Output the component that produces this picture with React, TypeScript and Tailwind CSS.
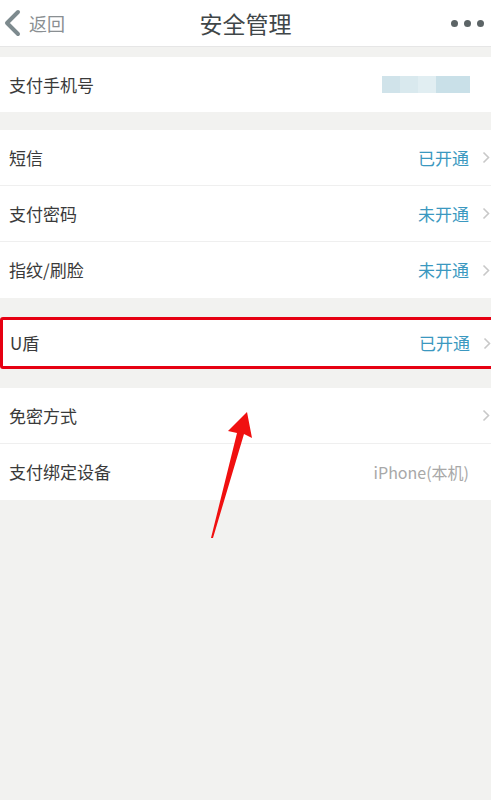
import React from "react";

const font = { fontFamily: '"Noto Sans CJK SC", "Noto Sans", sans-serif' };

function Chevron() {
  return (
    <svg width="8" height="13" viewBox="0 0 8 13" className="shrink-0">
      <path d="M1.5 1.5 L6.5 6.5 L1.5 11.5" fill="none" stroke="#c8c8c8" strokeWidth="1.6" />
    </svg>
  );
}

function Row({ label, value, valueClass, chevron = true, border = true }: { label: string; value?: string; valueClass?: string; chevron?: boolean; border?: boolean }) {
  return (
    <div className={`h-[56px] bg-white flex items-center pl-[9px] pr-[1px] ${border ? "border-b border-[#efefef]" : ""}`}>
      <span className="text-[17px] text-[#3a3a3a] flex-1">{label}</span>
      {value && <span className={`mr-[13px] ${valueClass ?? "text-[17px] text-[#3b98c0]"}`}>{value}</span>}
      {chevron ? <Chevron /> : <span className="w-[8px]" />}
    </div>
  );
}

export default function App() {
  return (
    <div className="w-[491px] h-[800px] bg-[#f2f2f0] relative overflow-hidden" style={font}>
      <div className="h-[47px] bg-white flex items-center relative border-b border-[#e6e6e6]">
        <svg width="18" height="28" viewBox="0 0 18 28" className="ml-[3px]">
          <path d="M15 3 L4 14 L15 25" fill="none" stroke="#7d8a8e" strokeWidth="4" strokeLinecap="round" strokeLinejoin="round" />
        </svg>
        <span className="ml-[8px] text-[18px] text-[#8a8f92]">返回</span>
        <span className="absolute left-0 right-0 text-center text-[23px] text-[#3f4648] pointer-events-none">安全管理</span>
        <div className="ml-auto mr-[7px] flex gap-[6px]">
          <span className="w-[7px] h-[7px] rounded-full bg-[#5c6466]" />
          <span className="w-[7px] h-[7px] rounded-full bg-[#5c6466]" />
          <span className="w-[7px] h-[7px] rounded-full bg-[#5c6466]" />
        </div>
      </div>
      <div className="h-[10px]" />
      <div className="h-[55px] bg-white flex items-center pl-[9px]">
        <span className="text-[17px] text-[#3a3a3a] flex-1">支付手机号</span>
        <div className="flex mr-[21px] h-[17px]">
          <span className="w-[18px] bg-[#d0e3ea]" />
          <span className="w-[18px] bg-[#d9e9ee]" />
          <span className="w-[18px] bg-[#e1eef2]" />
          <span className="w-[34px] bg-[#c9e0e8]" />
        </div>
      </div>
      <div className="h-[18px]" />
      <Row label="短信" value="已开通" />
      <Row label="支付密码" value="未开通" />
      <Row label="指纹/刷脸" value="未开通" border={false} />
      <div className="h-[19px]" />
      <div className="h-[52px] bg-white border-[3px] border-[#e60012] rounded-[3px] flex items-center pl-[7px] pr-0 mr-[-3px]">
        <span className="text-[17px] text-[#3a3a3a] flex-1">U盾</span>
        <span className="text-[17px] mr-[13px] text-[#3b98c0]">已开通</span>
        <Chevron />
      </div>
      <div className="h-[19px]" />
      <Row label="免密方式" />
      <Row label="支付绑定设备" value="iPhone(本机)" valueClass="text-[#a8a8a8] text-[16px]" chevron={false} border={false} />
      <svg className="absolute left-0 top-0" width="491" height="800" viewBox="0 0 491 800">
        <polygon points="211,538 237,433 228,431 247,412 252,438 244,434 213,538" fill="#f01010" />
      </svg>
    </div>
  );
}
